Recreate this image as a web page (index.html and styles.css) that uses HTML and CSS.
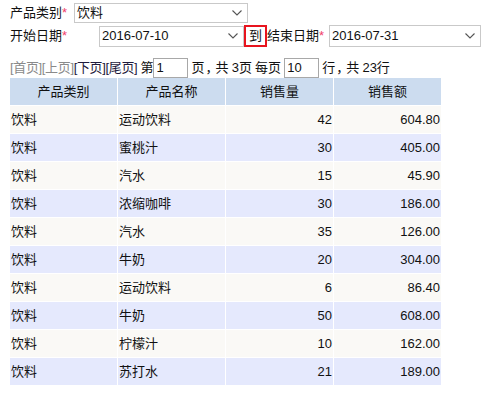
FILE: index.html
```html
<!DOCTYPE html>
<html>
<head>
<meta charset="utf-8">
<link rel="stylesheet" href="styles.css">
</head>
<body>
<div class="page">
  <div class="row row1">
    <span class="label lab-cat">产品类别<span class="req">*</span></span>
    <div class="select sel-cat"><span>饮料</span><svg class="chev" width="10" height="6" viewBox="0 0 10 6"><path d="M0.5 0.5 L5 5 L9.5 0.5" fill="none" stroke="#555" stroke-width="1.1"/></svg></div>
  </div>
  <div class="row row2">
    <span class="label lab-start">开始日期<span class="req">*</span></span>
    <div class="select sel-start"><span>2016-07-10</span><svg class="chev" width="10" height="6" viewBox="0 0 10 6"><path d="M0.5 0.5 L5 5 L9.5 0.5" fill="none" stroke="#555" stroke-width="1.1"/></svg></div>
    <span class="to">到</span>
    <span class="label lab-end">结束日期<span class="req">*</span></span>
    <div class="select sel-end"><span>2016-07-31</span><svg class="chev" width="10" height="6" viewBox="0 0 10 6"><path d="M0.5 0.5 L5 5 L9.5 0.5" fill="none" stroke="#555" stroke-width="1.1"/></svg></div>
  </div>
  <div class="pager"><span class="off">[首页][上页]</span><span class="on">[下页][尾页]</span> 第<span class="box">1</span> 页<span class="comma">，</span>共 3页 每页 <span class="box">10</span> 行<span class="comma">，</span>共 23行</div>
  <table class="grid">
    <thead>
      <tr><th>产品类别</th><th>产品名称</th><th>销售量</th><th>销售额</th></tr>
    </thead>
    <tbody>
      <tr class="odd"><td>饮料</td><td>运动饮料</td><td class="num">42</td><td class="num">604.80</td></tr>
      <tr class="even"><td>饮料</td><td>蜜桃汁</td><td class="num">30</td><td class="num">405.00</td></tr>
      <tr class="odd"><td>饮料</td><td>汽水</td><td class="num">15</td><td class="num">45.90</td></tr>
      <tr class="even"><td>饮料</td><td>浓缩咖啡</td><td class="num">30</td><td class="num">186.00</td></tr>
      <tr class="odd"><td>饮料</td><td>汽水</td><td class="num">35</td><td class="num">126.00</td></tr>
      <tr class="even"><td>饮料</td><td>牛奶</td><td class="num">20</td><td class="num">304.00</td></tr>
      <tr class="odd"><td>饮料</td><td>运动饮料</td><td class="num">6</td><td class="num">86.40</td></tr>
      <tr class="even"><td>饮料</td><td>牛奶</td><td class="num">50</td><td class="num">608.00</td></tr>
      <tr class="odd"><td>饮料</td><td>柠檬汁</td><td class="num">10</td><td class="num">162.00</td></tr>
      <tr class="even"><td>饮料</td><td>苏打水</td><td class="num">21</td><td class="num">189.00</td></tr>
    </tbody>
  </table>
</div>
</body>
</html>
```
FILE: styles.css
```css
html, body {
  margin: 0;
  padding: 0;
  background: #fff;
}
body {
  font-family: "Liberation Sans", "Noto Sans CJK SC", sans-serif;
  font-size: 13px;
  color: #111;
}
.page {
  padding: 3px 0 0 10px;
}
.row {
  display: flex;
  align-items: center;
}
.row1 {
  height: 20px;
}
.row2 {
  height: 22px;
  margin-top: 2px;
}
.label {
  line-height: 16px;
  white-space: nowrap;
}
.lab-cat {
  width: 64px;
}
.lab-start {
  width: 89px;
}
.lab-end {
  width: 62px;
}
.req {
  color: #f0406a;
}
.select {
  box-sizing: border-box;
  display: flex;
  align-items: center;
  justify-content: space-between;
  border: 1px solid #c9c9c9;
  background: #fff;
  padding: 0 5px 0 2px;
  line-height: 16px;
}
.sel-cat {
  width: 174px;
  height: 20px;
}
.sel-start {
  width: 145px;
  height: 21px;
}
.sel-end {
  width: 152px;
  height: 22px;
}
.chev {
  display: block;
}
.to {
  box-sizing: border-box;
  width: 23px;
  height: 22px;
  border: 2px solid #e8141e;
  display: flex;
  align-items: center;
  justify-content: center;
  line-height: 16px;
}
.pager {
  margin-top: 11px;
  height: 20px;
  line-height: 20px;
  white-space: nowrap;
  word-spacing: -0.5px;
}
.comma {
  letter-spacing: -3px;
  padding-left: 1px;
}
.off {
  color: #8a8a8a;
  letter-spacing: -0.35px;
}
.on {
  color: #1e1a3c;
  letter-spacing: -0.35px;
}
.box {
  box-sizing: border-box;
  display: inline-block;
  vertical-align: top;
  width: 35px;
  height: 20px;
  border: 1px solid #a8a8a8;
  padding-left: 2px;
  line-height: 18px;
  word-spacing: 0;
}
.grid {
  margin-left: -1px;
  margin-top: -1px;
  border-collapse: separate;
  border-spacing: 1px;
  table-layout: fixed;
  width: 433px;
}
.grid th, .grid td {
  width: 107px;
  height: 27px;
  padding: 0 1px;
  box-sizing: border-box;
  font-weight: normal;
  line-height: 16px;
  white-space: nowrap;
}
.grid th {
  background: #ccdcef;
  text-align: center;
}
.grid td {
  text-align: left;
}
.grid td.num {
  text-align: right;
}
.grid tr.odd td {
  background: #faf9f6;
}
.grid tr.even td {
  background: #e5e9fd;
}
```
